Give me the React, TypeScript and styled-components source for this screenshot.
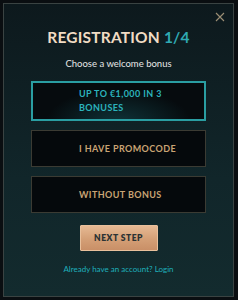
import React from "react";
import styled, { createGlobalStyle } from "styled-components";

const Global = createGlobalStyle`
  html, body { margin: 0; padding: 0; background: #0a0e11; }
  body { font-family: Lato, "Open Sans", sans-serif; }
`;

const Page = styled.div`
  width: 238px;
  height: 300px;
  padding: 3px 4px 3px 3px;
  box-sizing: border-box;
  background: #0a0e11;
`;

const Modal = styled.div`
  position: relative;
  height: 100%;
  box-sizing: border-box;
  border: 1px solid #3a4342;
  background: linear-gradient(180deg, #0d191d 0%, #11262a 60%, #132b2e 100%);
  display: flex;
  flex-direction: column;
  align-items: center;
  padding-top: 24px;
`;

const Close = styled.button`
  position: absolute;
  top: 6px;
  right: 6px;
  width: 14px;
  height: 14px;
  padding: 0;
  border: none;
  background: none;
  display: flex;
  align-items: center;
  justify-content: center;
`;

const Title = styled.h1`
  margin: 0;
  font-size: 15.5px;
  font-weight: 700;
  letter-spacing: 0.2px;
  color: #f1dcc4;
  line-height: 18px;
`;

const Accent = styled.span`
  color: #2fa9b3;
`;

const Subtitle = styled.p`
  margin: 11px 0 0;
  font-size: 9.5px;
  color: #e6e6e6;
  line-height: 14px;
`;

const Options = styled.div`
  margin-top: 10px;
  display: flex;
  flex-direction: column;
  gap: 9px;
  width: 175px;
`;

const Option = styled.button<{ $active?: boolean }>`
  box-sizing: border-box;
  width: 100%;
  height: ${(p) => (p.$active ? "40px" : "37px")};
  border: ${(p) => (p.$active ? "2px solid #2a9ea2" : "1px solid #3b3b33")};
  background: ${(p) =>
    p.$active
      ? "radial-gradient(ellipse at 50% 110%, #0f3338 0%, #060b0e 60%)"
      : "#05090c"};
  color: ${(p) => (p.$active ? "#2bb3bd" : "#c9a474")};
  font-family: Lato, "Open Sans", sans-serif;
  font-weight: 700;
  font-size: 9px;
  letter-spacing: 0.4px;
  line-height: 14px;
  text-align: left;
  padding: 0 20px 0 ${(p) => (p.$active ? "46px" : "47px")};
  cursor: pointer;
`;

const Next = styled.button`
  margin-top: 12px;
  width: 78px;
  height: 26px;
  border: 1px solid #e8c09c;
  border-radius: 1px;
  background: linear-gradient(180deg, #e6b993 0%, #d49f76 55%, #c98f67 100%);
  color: #2c3334;
  font-family: Lato, "Open Sans", sans-serif;
  font-weight: 800;
  font-size: 8.5px;
  letter-spacing: 0.5px;
  cursor: pointer;
`;

const Login = styled.a`
  margin-top: 13px;
  font-size: 8px;
  color: #1fb0bc;
  text-decoration: none;
`;

export default function App() {
  return (
    <Page>
      <Global />
      <Modal>
        <Close aria-label="Close">
          <svg width="10" height="10" viewBox="0 0 10 10">
            <path d="M1 1L9 9M9 1L1 9" stroke="#9c8f75" strokeWidth="1.1" />
          </svg>
        </Close>
        <Title>
          REGISTRATION <Accent>1/4</Accent>
        </Title>
        <Subtitle>Choose a welcome bonus</Subtitle>
        <Options>
          <Option $active>
            UP TO €1,000 IN 3
            <br />
            BONUSES
          </Option>
          <Option>I HAVE PROMOCODE</Option>
          <Option>WITHOUT BONUS</Option>
        </Options>
        <Next>NEXT STEP</Next>
        <Login href="#">Already have an account? Login</Login>
      </Modal>
    </Page>
  );
}
